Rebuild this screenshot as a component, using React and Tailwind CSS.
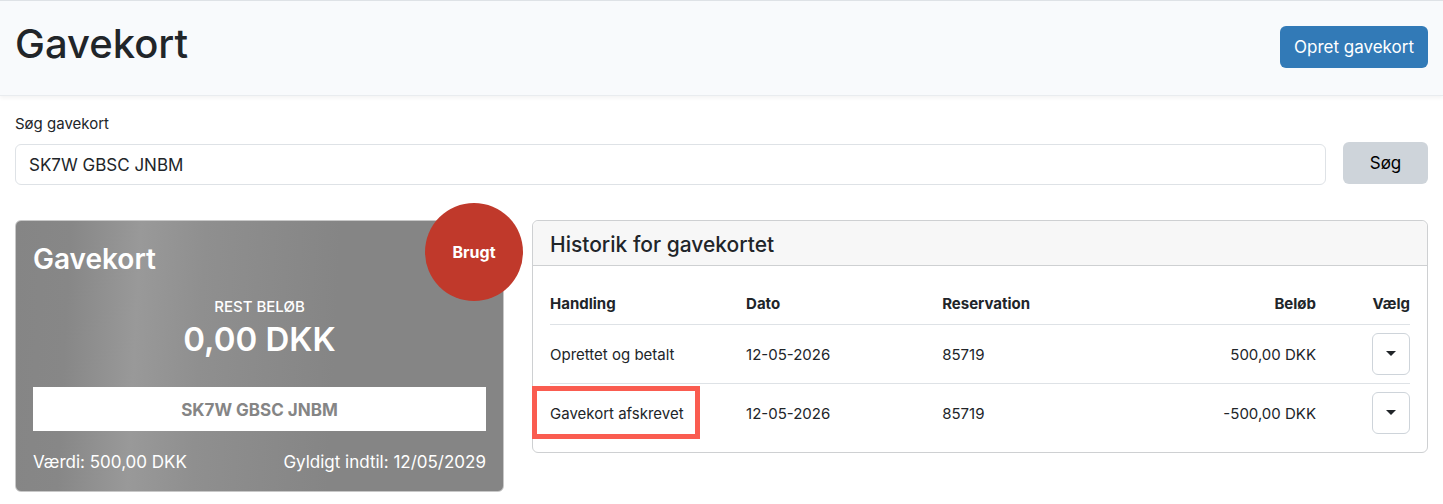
import React, { useState } from 'react';

const history = [
  { id: 1, action: 'Oprettet og betalt', date: '12-05-2026', reservation: '85719', amount: '500,00 DKK' },
  { id: 2, action: 'Gavekort afskrevet', date: '12-05-2026', reservation: '85719', amount: '-500,00 DKK', highlighted: true },
];

const PageHeader = () => (
  <header className="flex items-start justify-between border-t border-b border-t-[#dee2e6] border-b-[#e9ecef] bg-[#f8fafc] px-[15px] pt-[17px] pb-[26px] shadow-[0_2px_4px_rgba(0,0,0,0.05)]">
    <h1 className="text-[40px] leading-[51px] font-medium">Gavekort</h1>
    <button type="button" className="mt-2 h-[42px] rounded-md bg-[#327ab7] px-[14px] pt-[2px] text-[17px] text-white">
      Opret gavekort
    </button>
  </header>
);

const SearchForm = () => {
  const [code, setCode] = useState('SK7W GBSC JNBM');

  return (
    <form className="pt-4" onSubmit={(e) => e.preventDefault()}>
      <label htmlFor="code" className="block text-[15px] leading-6">Søg gavekort</label>
      <div className="mt-[6px] flex items-start gap-[17px]">
        <input
          id="code"
          type="text"
          value={code}
          onChange={(e) => setCode(e.target.value)}
          className="mt-[2px] h-[41px] min-w-0 flex-1 rounded-md border border-[#dee2e6] bg-white px-[13px] text-[17px]"
        />
        <button type="submit" className="h-[42px] w-[85px] rounded-md bg-[#ced4da] pt-[2px] text-[17px] text-black">
          Søg
        </button>
      </div>
    </form>
  );
};

const GiftCard = () => (
  <section className="relative h-[272px] rounded-md border border-[#c8c8c8] bg-[linear-gradient(93deg,#858585_0%,#878787_11%,#999999_25%,#8f8f8f_38%,#858585_65%,#858585_100%)] px-[17px] pt-5 text-white">
    <h2 className="text-[28px] leading-9 font-semibold">Gavekort</h2>
    <div className="mt-[19px] text-center">
      <p className="text-[15px] leading-[22px] font-medium">REST BELØB</p>
      <p className="text-[33px] leading-[42px] font-semibold">0,00 DKK</p>
    </div>
    <div className="mt-[27px] h-11 bg-white text-center text-[17px] leading-[46px] font-bold text-[#858585]">
      SK7W GBSC JNBM
    </div>
    <div className="mt-[19px] flex justify-between text-[17px] leading-6">
      <span>Værdi: 500,00 DKK</span>
      <span>Gyldigt indtil: 12/05/2029</span>
    </div>
    <span className="absolute -top-[18px] -right-5 flex h-[98px] w-[98px] items-center justify-center rounded-full bg-[#c0392b] text-base font-bold">
      Brugt
    </span>
  </section>
);

const HistoryTable = () => (
  <section className="rounded-md border border-[#ced0d2]">
    <h2 className="rounded-t-md border-b border-[#ced0d2] bg-[#f7f7f7] px-[17px] pt-[10px] pb-[6px] text-[21px] leading-7 font-medium">
      Historik for gavekortet
    </h2>
    <div className="px-[17px] pt-[17px] pb-[10px]">
      <table className="w-full table-fixed text-[15px] leading-6">
        <thead>
          <tr className="h-[41px] border-b border-[#dee2e6] text-left">
            <th className="w-[22.8%] pt-[2px] font-bold">Handling</th>
            <th className="w-[22.8%] pt-[2px] font-bold">Dato</th>
            <th className="w-[22.8%] pt-[2px] font-bold">Reservation</th>
            <th className="pt-[2px] text-right font-bold">Beløb</th>
            <th className="w-[94px] pt-[2px] text-right font-bold">Vælg</th>
          </tr>
        </thead>
        <tbody>
          {history.map((row) => (
            <tr key={row.id} className="h-[59px] border-b border-[#dee2e6] last:border-b-0">
              <td className="pt-[2px]">
                <span className="relative">
                  {row.action}
                  {row.highlighted && (
                    <span className="absolute -top-[18px] -right-4 -bottom-4 -left-[18px] border-5 border-[#fa5c50]" />
                  )}
                </span>
              </td>
              <td className="pt-[2px]">{row.date}</td>
              <td className="pt-[2px]">{row.reservation}</td>
              <td className="pt-[2px] text-right">{row.amount}</td>
              <td>
                <button
                  type="button"
                  aria-label="Vælg"
                  className="ml-auto flex h-[42px] w-[38px] items-center justify-center rounded-md border border-[#ced4da] bg-white"
                >
                  <svg width="10" height="5" viewBox="0 0 10 5" fill="#212529">
                    <path d="M0 0h10L5 5z" />
                  </svg>
                </button>
              </td>
            </tr>
          ))}
        </tbody>
      </table>
    </div>
  </section>
);

export default function App() {
  return (
    <div className="bg-white font-['Inter',sans-serif] text-[#212529]">
      <PageHeader />
      <main className="px-[15px] pb-3">
        <SearchForm />
        <div className="mt-[35px] grid grid-cols-[489fr_896fr] items-start gap-7">
          <GiftCard />
          <HistoryTable />
        </div>
      </main>
    </div>
  );
}
